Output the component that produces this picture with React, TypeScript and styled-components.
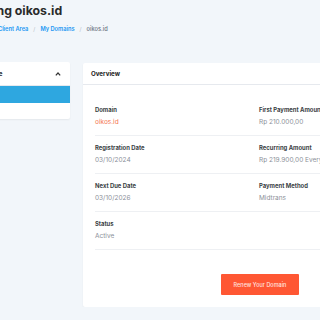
import React from 'react';
import styled, { createGlobalStyle } from 'styled-components';

const GlobalStyle = createGlobalStyle`
  body {
    margin: 0;
    background: #f2f6fa;
    font-family: Inter, "Noto Sans", "Liberation Sans", sans-serif;
    overflow: hidden;
  }
`

const Page = styled.div`
  margin-left: -48px;
  width: 520px;
  padding-top: 1px;
`

const Title = styled.h1`
  margin: 0;
  font-size: 12.3px;
  line-height: 20px;
  font-weight: 700;
  color: #2a2a2a;
`

const Breadcrumb = styled.div`
  display: flex;
  align-items: center;
  gap: 5px;
  margin-top: 2px;
  font-size: 5.7px;
  line-height: 12px;
  font-weight: 600;
`

const Crumb = styled.span<{ active?: boolean }>`
  color: ${({ active }) => (active ? '#6c7380' : '#2196f3')};
  font-weight: ${({ active }) => (active ? 500 : 600)};
`

const Sep = styled.span`
  color: #b8bec7;
  font-weight: 400;
`

const Layout = styled.div`
  display: flex;
  align-items: flex-start;
  gap: 13px;
  margin-top: 27px;
`

const Sidebar = styled.div`
  width: 118px;
  background: #fff;
  border-radius: 2px;
  box-shadow: 0 1px 2px rgba(0, 0, 0, 0.06);
  padding-bottom: 16px;
`

const SideHeader = styled.div`
  height: 23px;
  display: flex;
  align-items: center;
  justify-content: space-between;
  padding: 0 9px 0 26px;
  border-bottom: 1px solid #e6e9ee;
  font-size: 6.2px;
  font-weight: 700;
  color: #2a2a2a;
`

const SideItem = styled.div<{ active?: boolean }>`
  height: 17px;
  background: ${({ active }) => (active ? '#2ea7e0' : 'transparent')};
`

const Card = styled.div`
  width: 354px;
  margin-top: 1px;
  background: #fff;
  border-radius: 2px;
  box-shadow: 0 1px 2px rgba(0, 0, 0, 0.06);
`

const CardHeader = styled.div`
  height: 21px;
  display: flex;
  align-items: center;
  padding: 0 8px;
  border-bottom: 1px solid #e6e9ee;
  font-size: 6.2px;
  font-weight: 700;
  color: #222;
`

const CardBody = styled.div`
  padding: 13px 12px 12px;
  display: flex;
  flex-direction: column;
`

const Row = styled.div`
  display: grid;
  grid-template-columns: 164px 1fr;
  padding: 7px 0 8px;
  border-bottom: 1px solid #eef0f3;
`

const Field = styled.div`
  display: flex;
  flex-direction: column;
  gap: 3px;
  white-space: nowrap;
`

const Label = styled.div`
  font-size: 5.9px;
  line-height: 10px;
  font-weight: 700;
  color: #3b3f45;
`

const Value = styled.div<{ accent?: boolean }>`
  font-size: 6.5px;
  line-height: 9px;
  color: ${({ accent }) => (accent ? '#f47652' : '#8b9099')};
`

const Button = styled.button`
  align-self: center;
  margin-top: 24px;
  width: 78px;
  height: 21px;
  border: none;
  border-radius: 1px;
  background: #ff5733;
  color: rgba(255, 255, 255, 0.85);
  font-family: inherit;
  font-size: 5.5px;
  font-weight: 500;
  cursor: pointer;
`

const Chevron = () => (
  <svg width="6" height="4" viewBox="0 0 6 4">
    <path d="M0.8 3.4 L3 1 L5.2 3.4" fill="none" stroke="#333" strokeWidth="1.2" />
  </svg>
)

const rows = [
  [
    { label: 'Domain', value: 'oikos.id', accent: true },
    { label: 'First Payment Amount', value: 'Rp 210.000,00' },
  ],
  [
    { label: 'Registration Date', value: '03/10/2024' },
    { label: 'Recurring Amount', value: 'Rp 219.900,00 Every 1 Year/s' },
  ],
  [
    { label: 'Next Due Date', value: '03/10/2026' },
    { label: 'Payment Method', value: 'Midtrans' },
  ],
  [{ label: 'Status', value: 'Active' }],
]

export default function App() {
  return (
    <>
      <GlobalStyle />
      <Page>
        <Title>Managing oikos.id</Title>
        <Breadcrumb>
          <Crumb>Portal Home</Crumb>
          <Sep>/</Sep>
          <Crumb>Client Area</Crumb>
          <Sep>/</Sep>
          <Crumb>My Domains</Crumb>
          <Sep>/</Sep>
          <Crumb active>oikos.id</Crumb>
        </Breadcrumb>
        <Layout>
          <Sidebar>
            <SideHeader>
              <span>Manage</span>
              <Chevron />
            </SideHeader>
            <SideItem active />
          </Sidebar>
          <Card>
            <CardHeader>Overview</CardHeader>
            <CardBody>
              {rows.map((row, i) => (
                <Row key={i}>
                  {row.map(f => (
                    <Field key={f.label}>
                      <Label>{f.label}</Label>
                      <Value accent={f.accent}>{f.value}</Value>
                    </Field>
                  ))}
                </Row>
              ))}
              <Button>Renew Your Domain</Button>
            </CardBody>
          </Card>
        </Layout>
      </Page>
    </>
  )
}
